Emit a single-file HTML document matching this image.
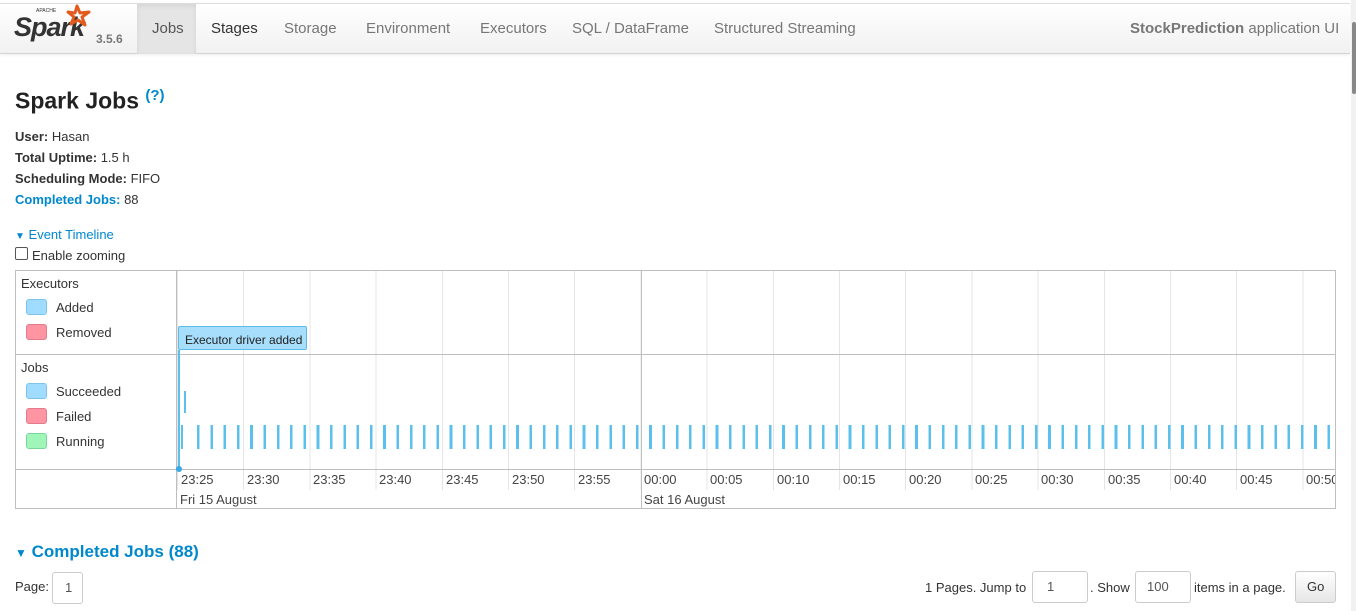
<!DOCTYPE html>
<html><head><meta charset="utf-8"><style>
*{box-sizing:border-box}
body{margin:0;width:1356px;height:611px;overflow:hidden;background:#fff;font-family:"Liberation Sans",sans-serif;color:#333;font-size:13px;position:relative}
.a{position:absolute;white-space:nowrap}
.nav{position:absolute;left:0;top:3px;width:1350px;height:51px;background:linear-gradient(#fff,#f1f1f1);border-top:1px solid #ddd;border-bottom:1px solid #d4d4d4;box-shadow:0 1px 3px rgba(0,0,0,.08)}
.nav .t{position:absolute;top:16px;font-size:15px;color:#777}
.blue{color:#0088cc}
.leg{position:absolute;width:21px;height:16px;border-radius:3px}
.grid{position:absolute;left:177px;top:271px;width:1157px;height:236px;background:repeating-linear-gradient(90deg,#e5e5e5 0 1px,transparent 1px 66.2px)}
.bars{position:absolute;left:197px;top:425px;width:1136px;height:24px;background:repeating-linear-gradient(90deg,#5bc0eb 0 2.6px,transparent 2.6px 13.3px)}
.tick{position:absolute;top:472px;font-size:13px;color:#444}
.box{position:absolute;border:1px solid #ccc;border-radius:3px;font-size:13px;color:#555;padding-left:14px;line-height:30px;height:32px}
</style></head><body>
<div class="nav">
 <div class="a" style="left:14px;top:8px;font:italic bold 27px 'Liberation Sans',sans-serif;color:#333;letter-spacing:-1px">Spark</div>
 <div class="a" style="left:36px;top:4px;font-size:5px;color:#333">APACHE</div>
 <svg class="a" style="left:64px;top:0px" width="28" height="26" viewBox="0 0 28 26"><path d="M13 2 L16 9 L25 8 L18 13 L21 21 L14 16 L7 20 L10 13 L4 8 L11 9 Z" fill="none" stroke="#e25a1c" stroke-width="3" stroke-linejoin="round"/></svg>
 <div class="a" style="left:96px;top:28px;font-size:12px;font-weight:bold;color:#777">3.5.6</div>
 <div class="a" style="left:137px;top:0;width:59px;height:50px;background:#e5e5e5;box-shadow:inset 0 2px 5px rgba(0,0,0,.08)"></div>
 <div class="t" style="left:152px;color:#555">Jobs</div>
 <div class="t" style="left:211px;color:#333">Stages</div>
 <div class="t" style="left:284px">Storage</div>
 <div class="t" style="left:366px">Environment</div>
 <div class="t" style="left:480px">Executors</div>
 <div class="t" style="left:572px">SQL / DataFrame</div>
 <div class="t" style="left:714px">Structured Streaming</div>
 <div class="t" style="left:1130px"><b>StockPrediction</b> application UI</div>
</div>
<div class="a" style="left:1351px;top:0;width:5px;height:611px;background:#f1f1f1"></div>
<div class="a" style="left:1352px;top:22px;width:4px;height:72px;background:#888;border-radius:2px"></div>

<div class="a" style="left:15px;top:87px;font-size:23px;font-weight:bold;color:#222">Spark Jobs <sup style="font-size:15px" class="blue">(?)</sup></div>
<div class="a" style="left:15px;top:129px"><b>User:</b> Hasan</div>
<div class="a" style="left:15px;top:150px"><b>Total Uptime:</b> 1.5 h</div>
<div class="a" style="left:15px;top:171px"><b>Scheduling Mode:</b> FIFO</div>
<div class="a" style="left:15px;top:192px"><b class="blue">Completed Jobs:</b> 88</div>
<div class="a blue" style="left:15px;top:227px"><span style="font-size:10px">&#9660;</span> Event Timeline</div>
<div class="a" style="left:15px;top:247px;width:13px;height:13px;border:1px solid #555;border-radius:2px"></div>
<div class="a" style="left:32px;top:248px">Enable zooming</div>

<div class="a" style="left:15px;top:270px;width:1321px;height:239px;border:1px solid #bfbfbf"></div>
<div class="grid"></div>
<div class="a" style="left:641px;top:271px;width:1px;height:237px;background:#bfbfbf"></div>
<div class="a" style="left:176px;top:271px;width:1px;height:237px;background:#bfbfbf"></div>
<div class="a" style="left:16px;top:354px;width:1319px;height:1px;background:#bfbfbf"></div>
<div class="a" style="left:16px;top:469px;width:1319px;height:1px;background:#bfbfbf"></div>
<div class="a" style="left:177px;top:490px;width:1158px;height:18px;background:#fff"></div>
<div class="a" style="left:641px;top:490px;width:1px;height:18px;background:#bfbfbf"></div>

<div class="a" style="left:21px;top:276px">Executors</div>
<div class="leg" style="left:26px;top:299px;background:#a0dcff;border:1px solid #7cc4ec"></div><div class="a" style="left:56px;top:300px">Added</div>
<div class="leg" style="left:26px;top:324px;background:#ff94a3;border:1px solid #e57a8a"></div><div class="a" style="left:56px;top:325px">Removed</div>
<div class="a" style="left:21px;top:360px">Jobs</div>
<div class="leg" style="left:26px;top:383px;background:#a0dcff;border:1px solid #7cc4ec"></div><div class="a" style="left:56px;top:384px">Succeeded</div>
<div class="leg" style="left:26px;top:408px;background:#ff94a3;border:1px solid #e57a8a"></div><div class="a" style="left:56px;top:409px">Failed</div>
<div class="leg" style="left:26px;top:433px;background:#a0f5b8;border:1px solid #7ad79a"></div><div class="a" style="left:56px;top:434px">Running</div>

<div class="a" style="left:178px;top:326px;width:129px;height:24px;background:#a6defc;border:1px solid #5bbbe8;border-radius:2px;font-size:12px;color:#222;padding:6px 0 0 6px">Executor driver added</div>
<div class="a" style="left:178px;top:350px;width:2px;height:120px;background:#5bc0eb"></div>
<div class="a" style="left:176px;top:466px;width:6px;height:6px;border-radius:3px;background:#38a8e8"></div>
<div class="a" style="left:184px;top:391px;width:2px;height:22px;background:#5bc0eb"></div>
<div class="a" style="left:181px;top:425px;width:2px;height:24px;background:#5bc0eb"></div>
<div class="bars"></div>

<div class="tick" style="left:181px">23:25</div><div class="tick" style="left:247px">23:30</div><div class="tick" style="left:313px">23:35</div><div class="tick" style="left:379px">23:40</div><div class="tick" style="left:446px">23:45</div><div class="tick" style="left:512px">23:50</div><div class="tick" style="left:578px">23:55</div><div class="tick" style="left:644px">00:00</div><div class="tick" style="left:710px">00:05</div><div class="tick" style="left:777px">00:10</div><div class="tick" style="left:843px">00:15</div><div class="tick" style="left:909px">00:20</div><div class="tick" style="left:975px">00:25</div><div class="tick" style="left:1041px">00:30</div><div class="tick" style="left:1108px">00:35</div><div class="tick" style="left:1174px">00:40</div><div class="tick" style="left:1240px">00:45</div><div class="tick" style="left:1306px;width:29px;overflow:hidden">00:50</div>
<div class="tick" style="left:180px;top:492px">Fri 15 August</div>
<div class="tick" style="left:644px;top:492px">Sat 16 August</div>

<div class="a blue" style="left:15px;top:542px;font-size:17px;font-weight:bold"><span style="font-size:12px">&#9660;</span> Completed Jobs (88)</div>
<div class="a" style="left:15px;top:579px">Page:</div>
<div class="box" style="left:52px;top:572px;width:31px;padding-left:12px">1</div>
<div class="a" style="left:925px;top:580px">1 Pages. Jump to</div>
<div class="box" style="left:1032px;top:571px;width:56px">1</div>
<div class="a" style="left:1090px;top:580px">. Show</div>
<div class="box" style="left:1135px;top:571px;width:56px;padding-left:11px">100</div>
<div class="a" style="left:1194px;top:580px">items in a page.</div>
<div class="box" style="left:1295px;top:571px;width:41px;padding-left:11px;background:linear-gradient(#fff,#e6e6e6);color:#333">Go</div>
</body></html>
